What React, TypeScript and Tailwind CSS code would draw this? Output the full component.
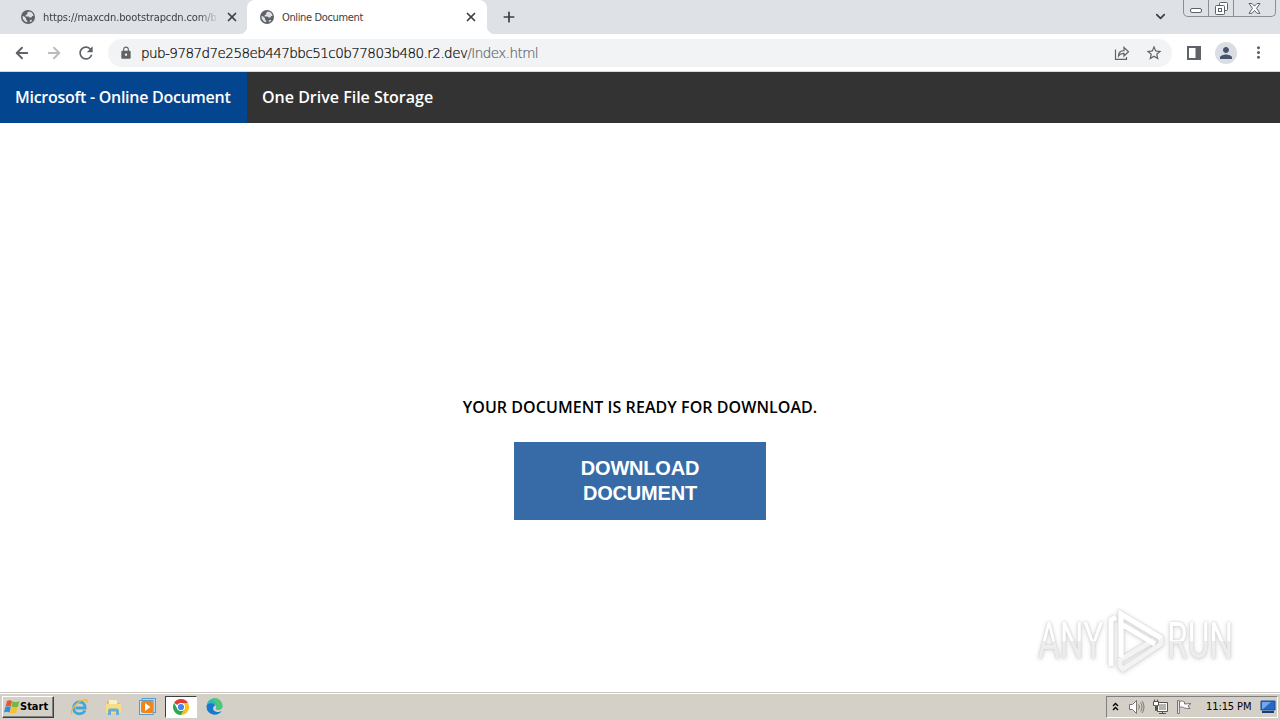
import { ArrowLeft, ArrowRight, ChevronDown, Plus, X } from 'lucide-react'
import { MdLock, MdMoreVert, MdPerson, MdRefresh, MdStarBorder } from 'react-icons/md'

const navLinks = [
	{ label: 'Microsoft - Online Document', className: 'w-[247px] bg-[#04458f] pl-[15px] tracking-[-0.27px]' },
	{ label: 'One Drive File Storage', className: 'pl-[15px]' },
]

export default function App() {
	return (
		<div className="flex h-[720px] w-[1280px] flex-col overflow-hidden bg-white">
			<TabStrip />
			<Toolbar />
			<Page />
			<Taskbar />
		</div>
	)
}

function Globe() {
	return (
		<svg width="14" height="14" viewBox="0 0 14 14" className="shrink-0">
			<circle cx="7" cy="7" r="7" fill="#5f6368" />
			<path d="M8 1.600 6.200 2.800v1.500L4.600 5.200v1.300h3l1 1h1.800l.8-1.600h1.300C12.300 3.600 10.500 1.800 8 1.600zM1.500 6.300c-.2 2.800 1.600 5.400 4.700 6v-1.600L5 9.500V8.200L3 6.300zM8.800 12.100c1-.3 1.900-.9 2.500-1.700L10 9.700l-1.200.8z" fill="#dee1e6" />
		</svg>
	)
}

function TabStrip() {
	return (
		<div className="flex h-[34px] shrink-0 bg-[#dee1e6] font-['DejaVu_Sans_Condensed','DejaVu_Sans',sans-serif] text-[11px] text-[#3c4043]">
			<div className="flex w-[247px] items-center pl-[21px]">
				<Globe />
				<div className="mt-0.5 ml-2 w-[176px] whitespace-nowrap tracking-[-0.12px] [mask-image:linear-gradient(to_right,black_88%,transparent)]">
					https://maxcdn.bootstrapcdn.com/b
				</div>
				<X className="ml-1.5 size-[14px] text-[#3c4043]" strokeWidth={3} />
			</div>
			<div className="relative flex w-[240px] items-center rounded-t-lg bg-white pl-[13px]">
				<div className="absolute bottom-0 -left-2 size-2 bg-[radial-gradient(circle_at_0_0,#dee1e6_8px,white_8.5px)]" />
				<div className="absolute -right-2 bottom-0 size-2 bg-[radial-gradient(circle_at_100%_0,#dee1e6_8px,white_8.5px)]" />
				<Globe />
				<div className="mt-0.5 ml-2 w-[175px] whitespace-nowrap tracking-[-0.36px]">Online Document</div>
				<X className="ml-[7px] size-[14px] text-[#3c4043]" strokeWidth={3} />
			</div>
			<div className="flex flex-1 items-center pl-[14px]">
				<Plus className="size-4 text-[#3c4043]" strokeWidth={2.6} />
			</div>
			<ChevronDown className="mt-[9px] mr-[15px] size-[15px] text-[#3c4043]" strokeWidth={2.8} />
			<WindowButtons />
		</div>
	)
}

function WindowButtons() {
	return (
		<div className="mr-1 flex h-[17px] w-[93px] rounded-b-[5px] border border-t-0 border-[#8b8e95] text-[#5c6067]">
			<div className="flex w-[25px] items-end justify-center border-r border-[#8b8e95] pb-[3px]">
				<div className="h-[5px] w-[12px] rounded-[2px] border border-current bg-white" />
			</div>
			<div className="flex w-[25px] items-center justify-center border-r border-[#8b8e95]">
				<svg width="13" height="13" viewBox="0 0 13 13" fill="#fff" stroke="currentColor">
					<rect x="4.500" y=".5" width="8" height="8" rx="1" />
					<rect x=".5" y="3.500" width="9" height="9" rx="1" />
					<rect x="3.500" y="6.500" width="3" height="3" />
				</svg>
			</div>
			<div className="flex flex-1 items-center justify-center">
				<svg width="13" height="11" viewBox="0 0 13 11" strokeLinejoin="round">
					<path d="M1 .5h3l2.500 2.700L9 .5h3L8.500 5.300l3.500 5H9L6.500 7.500 4 10.300H1l3.500-5z" fill="#fff" stroke="currentColor" />
				</svg>
			</div>
		</div>
	)
}

function Toolbar() {
	return (
		<div className="flex h-[38px] shrink-0 items-center border-b border-[#d5d9dc] bg-white text-[#5f6368]">
			<ArrowLeft className="ml-[13px] size-[18px]" strokeWidth={2.5} />
			<ArrowRight className="ml-[14px] size-[18px] text-[#babcbe]" strokeWidth={2.5} />
			<MdRefresh className="ml-[13px] size-5" />
			<div className="ml-3 flex h-[28px] w-[1064px] items-center rounded-full bg-[#f1f3f4]">
				<MdLock className="ml-[11px] size-[14px]" />
				<div className="mt-px ml-2 whitespace-nowrap font-['DejaVu_Sans',sans-serif] text-[13.5px] font-extralight tracking-[-0.55px] text-black [-webkit-text-stroke:0.2px]">
					pub-9787d7e258eb447bbc51c0b77803b480.r2.dev<span className="text-[#5f6368]">/Index.html</span>
				</div>
				<svg className="ml-auto" width="16" height="16" viewBox="0 0 16 16" fill="none" stroke="currentColor" strokeWidth="1.200">
					<path d="M1.500 4.500v9.800h11V12M4.500 11c0-3.500 2-5.300 5.500-5.300V2.500l4.500 4.300L10 11V8.300c-2.700 0-4.300.7-5.500 2.700z" />
				</svg>
				<MdStarBorder className="mr-[9px] ml-[15px] size-[18px]" />
			</div>
			<svg className="ml-[15px]" width="14" height="14" viewBox="0 0 14 14">
				<path d="M0 0h14v14H0zM2 2v10h6.500V2z" fill="currentColor" fillRule="evenodd" />
			</svg>
			<div className="ml-[14px] flex size-[22px] items-center justify-center rounded-full bg-[#dadde2]">
				<MdPerson className="size-[18px] text-[#47536f]" />
			</div>
			<MdMoreVert className="ml-[12px] size-[19px]" />
		</div>
	)
}

function Page() {
	return (
		<div className="relative flex flex-1 flex-col font-['Open_Sans',sans-serif]">
			<nav className="flex h-[51px] bg-[#333] text-[16px] font-semibold text-white">
				{navLinks.map(link => (
					<a key={link.label} className={`flex items-center pb-0.5 whitespace-nowrap ${link.className}`}>
						{link.label}
					</a>
				))}
			</nav>
			<main className="flex flex-col items-center pt-[272px]">
				<p className="h-[24px] text-[16px] leading-[24px] font-semibold tracking-[0.06px] whitespace-nowrap text-black">
					YOUR DOCUMENT IS READY FOR DOWNLOAD.
				</p>
				<button className="mt-[23px] h-[78px] w-[252px] bg-[#366ba8] px-12 font-['Liberation_Sans',sans-serif] text-[20px] leading-[25px] font-bold tracking-[-0.2px] text-white">
					DOWNLOAD DOCUMENT
				</button>
			</main>
			<Watermark />
		</div>
	)
}

function Watermark() {
	return (
		<div className="absolute top-[536px] left-[1038px] flex h-[66px] items-center font-['Roboto',sans-serif] text-[50px] text-white [filter:drop-shadow(0_0_1px_#ccc)_drop-shadow(0_1px_2px_#ddd)]">
			<div className="w-[66px]">
				<span className="inline-block origin-left scale-x-[0.67] bg-gradient-to-b from-white from-50% to-[#ededed] to-50% bg-clip-text text-transparent">ANY</span>
			</div>
			<svg width="64" height="66" viewBox="0 0 64 66" fill="none" strokeWidth="5">
				<path d="M7 58V12l5-3" stroke="#fff" />
				<path d="M17 49V6l40 24v6L19 61l-3-3v-6l34-20" stroke="#f3f3f3" />
				<path d="M17 49V6l40 24M19 17l32 19" stroke="#fff" />
			</svg>
			<span className="-ml-px w-[98px] origin-left scale-x-[0.67] bg-gradient-to-b from-white from-50% to-[#ededed] to-50% bg-clip-text text-transparent">RUN</span>
		</div>
	)
}

function Taskbar() {
	return (
		<div className="flex h-[28px] shrink-0 items-center border-t border-[#c9c6c0] bg-[#d4d0c8] shadow-[inset_0_1px_0_white]">
			<button className="ml-0.5 flex h-[22px] w-[52px] items-center border border-t-white border-r-[#404040] border-b-[#404040] border-l-white pl-px font-['DejaVu_Sans_Condensed','DejaVu_Sans',sans-serif] text-[11px] font-bold text-black shadow-[inset_-1px_-1px_0_#808080]">
				<svg className="shrink-0" width="16" height="16" viewBox="0 0 16 16">
					<path d="M3 2c2-1 3.500-.8 5 0L6.800 7.500C5 6.500 3.500 6.500 1.600 7.500z" fill="#e9562b" />
					<path d="M8.500 2.300c2 1 4 1 7 0l-1.500 5.500c-2 1-4 1-6.500 0z" fill="#75b843" />
					<path d="M1.400 8c2-1 3.500-.8 5.400 0l-1.300 5.500C3.600 12.500 2 12.500 0 13.500z" fill="#348ed5" />
					<path d="M7.300 8.300c2 1 4 1 6.500 0l-1.500 5.500c-2 1-4 1-6.400 0z" fill="#f5c22e" />
				</svg>
				<span className="mt-0.5">Start</span>
			</button>
			<div className="ml-[16px] flex items-center">
				<svg width="18" height="18" viewBox="0 0 18 18" fill="none">
					<path d="M15 12.500c-1 2.200-3 3.300-5.500 3.300C6 15.800 3.500 13.300 3.500 10S6 4 9.500 4s6 2.500 5.700 6H5.500" stroke="#43a6db" strokeWidth="2.800" />
					<path d="M2 16C-.5 12 9 .5 16.500 2c1 .5.5 2 0 3" stroke="#e7bd3c" strokeWidth="1.400" />
				</svg>
				<svg className="ml-[17px]" width="18" height="18" viewBox="0 0 18 18">
					<path d="M2 3h5l1 2h7v9H2z" fill="#e4bf5d" />
					<path d="M4 2h8v6H4z" fill="#f7f0ca" />
					<path d="M1 6h15v9H1z" fill="#f5dd89" />
					<path d="M3 17v-4c0-1.500 1-2.500 2-2.500h7c1 0 2 1 2 2.500v4h-3v-3.500H6V17z" fill="#69add2" />
				</svg>
				<svg className="ml-4" width="17" height="17" viewBox="0 0 17 17">
					<rect x="3" y=".5" width="13.500" height="14" fill="#b7daf0" stroke="#5a9bc9" />
					<rect x=".5" y="2.500" width="13.500" height="14" fill="#d6edf8" stroke="#5a9bc9" />
					<rect x="2" y="3" width="12" height="12" rx="2" fill="#f08519" />
					<path d="m6 5 5.500 4L6 13z" fill="#fff" />
				</svg>
				<div className="ml-[9px] flex h-[22px] w-[32px] items-center justify-center border border-t-[#404040] border-r-white border-b-white border-l-[#404040] bg-white">
					<svg width="16" height="16" viewBox="0 0 16 16">
						<path d="M8 8 1.070 4A8 8 0 0 1 14.930 4z" fill="#e33b2e" />
						<path d="M8 4h6.930A8 8 0 0 1 8 16l3.460-6z" fill="#fbc116" />
						<path d="M1.070 4 4.540 10l3.460 2 3.460-2L8 16A8 8 0 0 1 1.070 4z" fill="#2da94f" />
						<circle cx="8" cy="8" r="4" fill="#fff" />
						<circle cx="8" cy="8" r="3.100" fill="#4285f4" />
					</svg>
				</div>
				<svg className="ml-[9px]" width="17" height="17" viewBox="0 0 17 17">
					<path d="M.5 8.500A8 8 0 0 1 16.500 8c0 2.500-2 3.700-4 3.700s-3-.7-2.400-1.800C11 8 9.500 6 6.500 6S1 7 .5 8.500z" fill="#35b9b0" />
					<path d="M5 1.300C10-1.500 16.500 2 16.500 8c0 2.500-2 3.700-4 3.700s-3-.7-2.400-1.800C12 6 9 3 5 1.300z" fill="#4bc877" />
					<path d="M.5 8.500C1 5 7 4 9.500 7.500 6 8 6 13.500 11 14c2 .2 3.500-.5 4.500-1-1.500 2.500-4 3.800-7 3.800A8 8 0 0 1 .5 8.500z" fill="#1679cf" />
				</svg>
			</div>
			<Tray />
		</div>
	)
}

function Tray() {
	return (
		<div className="mr-0.5 ml-auto flex h-[22px] w-[172px] items-center border border-t-[#808080] border-r-white border-b-white border-l-[#808080]">
			<svg className="ml-[5px]" width="7" height="9" viewBox="0 0 7 9" fill="none" stroke="#000" strokeWidth="1.400">
				<path d="m1 4 2.500-2.500L6 4M1 8l2.500-2.500L6 8" />
			</svg>
			<svg className="ml-[9px]" width="17" height="16" viewBox="0 0 17 16" fill="none" stroke="#77746f">
				<path d="M1.500 5.500h3l4-4v13l-4-4h-3z" fill="#fff" />
				<path d="M10.500 5.500c1 1.500 1 3.500 0 5M12.500 3.500c2 3 2 6 0 9M14 2c2.600 4 2.600 8 0 12" />
			</svg>
			<svg className="ml-[7px]" width="17" height="16" viewBox="0 0 17 16" fill="#fff" stroke="#55524e">
				<path d="M5.500 3.500h10v9h-10zM7 14.500h7M10.500 12.500v2" />
				<path d="M7 5h7v6H7z" fill="#b5b3ae" stroke="none" />
				<path d="M1.500 2.500h5v4h-2v5h-1v-5h-2zM2.500 .5v2M5.500 .5v2" />
			</svg>
			<svg className="ml-[7px]" width="17" height="16" viewBox="0 0 17 16" fill="#fff" stroke="#77746f">
				<path d="M1.500 1.500h1.800v13H1.500z" />
				<path d="M3.500 2.500c3-1 4 0 5 .5v2c2 0 4-.5 6.500-.5l-3 2.500 2 2.500c-3 0-5 0-6.500-1-1.500-.8-2.500-.5-4 0z" />
			</svg>
			<span className="mt-0.5 ml-[13px] w-[46px] font-['DejaVu_Sans_Condensed','DejaVu_Sans',sans-serif] text-[11px] tracking-[-0.1px] whitespace-nowrap text-black">11:15 PM</span>
			<svg className="ml-[8px] shrink-0" width="16" height="14" viewBox="0 0 16 14">
				<path d="M1 1h14v9H1z" fill="#2867c4" stroke="#174b9c" />
				<path d="M2 2h9L3 9H2z" fill="#6fa9ea" />
				<path d="M2 11h12v2H2z" fill="#173e75" />
			</svg>
		</div>
	)
}
